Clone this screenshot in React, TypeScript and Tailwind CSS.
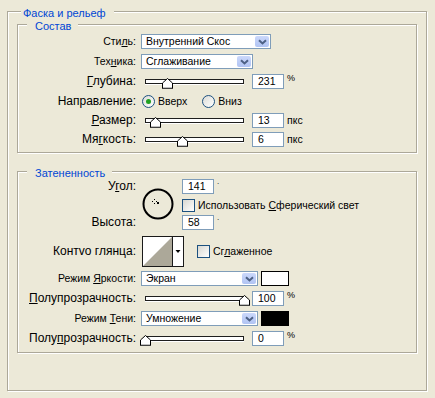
import React from 'react';

const U = ({ children }: { children: React.ReactNode }) => (
  <span className="underline underline-offset-[1px] decoration-[1px]">{children}</span>
);

function Label({ children, small }: { children: React.ReactNode; small?: boolean }) {
  return (
    <div
      className={
        small
          ? 'w-[118px] shrink-0 text-right text-[10.5px] leading-[15px] whitespace-nowrap'
          : 'w-[118px] shrink-0 text-right text-[12px] leading-[15px] whitespace-nowrap'
      }
    >
      {children}
    </div>
  );
}

function Select({ text, className }: { text: string; className: string }) {
  return (
    <div className={`flex h-[15px] items-stretch border border-[#7f9db9] bg-white ${className}`}>
      <span className="flex-1 pl-[4px] text-[10.5px] leading-[13px] whitespace-nowrap overflow-hidden">{text}</span>
      <span className="my-[1px] mr-[1px] flex w-[14px] items-center justify-center rounded-[2px] bg-gradient-to-b from-[#cbd8fb] to-[#b1c4f3]">
        <svg width="9" height="6" viewBox="0 0 9 6">
          <path d="M1 1.2 L4.5 4.5 L8 1.2" fill="none" stroke="#4d6185" strokeWidth="2" />
        </svg>
      </span>
    </div>
  );
}

function Field({ value }: { value: string }) {
  return (
    <div className="h-[15px] w-[32px] shrink-0 border border-[#7f9db9] bg-white pl-[5px] text-[10.5px] leading-[13px]">
      {value}
    </div>
  );
}

function Slider({ pct }: { pct: number }) {
  const left = 4 + pct * 99 - 5;
  return (
    <div className="relative h-[15px] w-[108px] shrink-0">
      <div className="absolute left-[4px] right-[5px] top-[5px] h-[5px] border border-[#1e1e1e] bg-white shadow-[0_1px_0_#fff]" />
      <svg className="absolute top-[4px]" style={{ left }} width="11" height="11" viewBox="0 0 11 11">
        <polygon points="0.5,5 5.5,0.5 10.5,5 10.5,10.5 0.5,10.5" fill="#fff" stroke="#000" strokeWidth="1" />
        <line x1="1" y1="10" x2="10" y2="10" stroke="#808080" />
      </svg>
    </div>
  );
}

function Pct() {
  return <span className="ml-[3px] self-start text-[9px] leading-[9px]">%</span>;
}

function Check() {
  return (
    <span className="block h-[13px] w-[13px] shrink-0 border border-[#1c5180] bg-gradient-to-br from-[#d8d8d2] to-white" />
  );
}

function Radio({ on }: { on?: boolean }) {
  return (
    <span className="flex h-[13px] w-[13px] shrink-0 items-center justify-center rounded-full border border-[#1c5180] bg-gradient-to-br from-[#dcdcd7] to-white">
      {on && <span className="h-[5px] w-[5px] rounded-full bg-[#21a121]" />}
    </span>
  );
}

function Group({ title, children, className }: { title: string; children: React.ReactNode; className: string }) {
  return (
    <div className={`border border-[#aca899] shadow-[inset_1px_1px_0_#fff,1px_1px_0_#fff] ${className}`}>
      <div className="-mt-[5px] ml-[9px] w-fit bg-[#ece9d8] pl-[8px] pr-[7px] text-[11px] leading-[12px] text-[#0046d5]">
        {title}
      </div>
      {children}
    </div>
  );
}

export default function App() {
  return (
    <div className="h-[398px] w-[435px] overflow-hidden bg-[#ece9d8] pl-[7px] pt-[11px] font-['Liberation_Sans',Arial,sans-serif] text-black">
      <div className="h-[380px] w-[420px] border border-[#aca899] shadow-[inset_1px_1px_0_#fff,1px_1px_0_#fff]">
        <div className="-mt-[5px] ml-[13px] w-fit bg-[#ece9d8] pl-[2px] pr-[8px] text-[11px] leading-[12px] text-[#0046d5]">
          Фаска и рельеф
        </div>

        <Group title="Состав" className="ml-[9px] mt-[5px] w-[400px] pb-[5px]">
          <div className="mt-[2px] flex h-[15px] items-center">
            <Label small>
              Сти<U>л</U>ь:
            </Label>
            <Select text="Внутренний Скос" className="ml-[5px] w-[130px]" />
          </div>
          <div className="mt-[5px] flex h-[15px] items-center">
            <Label small>
              Тех<U>н</U>ика:
            </Label>
            <Select text="Сглаживание" className="ml-[5px] w-[112px]" />
          </div>
          <div className="mt-[5px] flex h-[15px] items-center">
            <Label>
              <U>Г</U>лубина:
            </Label>
            <div className="ml-[5px]">
              <Slider pct={0.22} />
            </div>
            <div className="ml-[3px]">
              <Field value="231" />
            </div>
            <Pct />
          </div>
          <div className="mt-[5px] flex h-[15px] items-center">
            <Label>Направление:</Label>
            <span className="ml-[6px]">
              <Radio on />
            </span>
            <span className="ml-[3px] text-[10.5px] leading-[13px]">Вверх</span>
            <span className="ml-[15px]">
              <Radio />
            </span>
            <span className="ml-[3px] text-[10.5px] leading-[13px]">Вниз</span>
          </div>
          <div className="mt-[4px] flex h-[15px] items-center">
            <Label>
              <U>Р</U>азмер:
            </Label>
            <div className="ml-[5px]">
              <Slider pct={0.1} />
            </div>
            <div className="ml-[3px]">
              <Field value="13" />
            </div>
            <span className="ml-[3px] text-[10.5px]">пкс</span>
          </div>
          <div className="mt-[4px] flex h-[15px] items-center">
            <Label>
              Мя<U>г</U>кость:
            </Label>
            <div className="ml-[5px]">
              <Slider pct={0.37} />
            </div>
            <div className="ml-[3px]">
              <Field value="6" />
            </div>
            <span className="ml-[3px] text-[10.5px]">пкс</span>
          </div>
        </Group>

        <Group title="Затененность" className="ml-[9px] mt-[18px] w-[400px] pb-[6px]">
          <div className="mt-[0px] flex h-[51px]">
            <div className="flex w-[118px] shrink-0 flex-col justify-between">
              <Label>
                У<U>г</U>ол:
              </Label>
              <Label>Высота:</Label>
            </div>
            <svg className="ml-[6px] mt-[9px]" width="32" height="32" viewBox="0 0 32 32">
              <circle cx="16" cy="16" r="14.5" fill="none" stroke="#000" strokeWidth="2" />
              <rect x="12" y="11" width="1" height="1" fill="#000" />
              <rect x="12" y="15" width="1" height="1" fill="#000" />
              <rect x="10" y="13" width="1" height="1" fill="#000" />
              <rect x="14" y="13" width="1" height="1" fill="#000" />
              <rect x="15" y="14" width="2" height="2" fill="#000" />
            </svg>
            <div className="ml-[8px] flex flex-col">
              <div className="flex">
                <Field value="141" />
                <span className="ml-[3px] text-[8px] leading-[6px]">.</span>
              </div>
              <div className="mt-[5px] flex items-center">
                <Check />
                <span className="ml-[3px] text-[10.5px] leading-[13px] whitespace-nowrap">
                  Использовать <U>С</U>ферический свет
                </span>
              </div>
              <div className="mt-[3px] flex">
                <Field value="58" />
                <span className="ml-[3px] text-[8px] leading-[6px]">.</span>
              </div>
            </div>
          </div>

          <div className="mt-[6px] flex h-[31px] items-center">
            <Label>Контvo глянца:</Label>
            <svg className="ml-[6px]" width="42" height="31" viewBox="0 0 42 31">
              <rect x="0.5" y="0.5" width="41" height="30" fill="#fff" stroke="#1a1a1a" />
              <polygon points="1,30 30,1 30,30" fill="#aca899" />
              <line x1="30.5" y1="1" x2="30.5" y2="30" stroke="#1a1a1a" />
              <polygon points="33.5,14 38.5,14 36,17" fill="#000" />
            </svg>
            <span className="ml-[13px]">
              <Check />
            </span>
            <span className="ml-[3px] text-[10.5px] leading-[13px]">
              Сг<U>л</U>аженное
            </span>
          </div>

          <div className="mt-[4px] flex h-[15px] items-center">
            <Label small>
              Режим <U>Я</U>ркости:
            </Label>
            <Select text="Экран" className="ml-[5px] w-[117px]" />
            <span className="ml-[3px] h-[15px] w-[28px] border border-black bg-white" />
          </div>
          <div className="mt-[5px] flex h-[15px] items-center">
            <Label>
              <U>П</U>олупрозрачность:
            </Label>
            <div className="ml-[5px]">
              <Slider pct={1} />
            </div>
            <div className="ml-[3px]">
              <Field value="100" />
            </div>
            <Pct />
          </div>
          <div className="mt-[5px] flex h-[15px] items-center">
            <Label small>
              Режим <U>Т</U>ени:
            </Label>
            <Select text="Умножение" className="ml-[5px] w-[117px]" />
            <span className="ml-[3px] h-[15px] w-[28px] border border-black bg-black" />
          </div>
          <div className="mt-[5px] flex h-[15px] items-center">
            <Label>
              Полу<U>п</U>розрачность:
            </Label>
            <div className="ml-[5px]">
              <Slider pct={0} />
            </div>
            <div className="ml-[3px]">
              <Field value="0" />
            </div>
            <Pct />
          </div>
        </Group>
      </div>
    </div>
  );
}
